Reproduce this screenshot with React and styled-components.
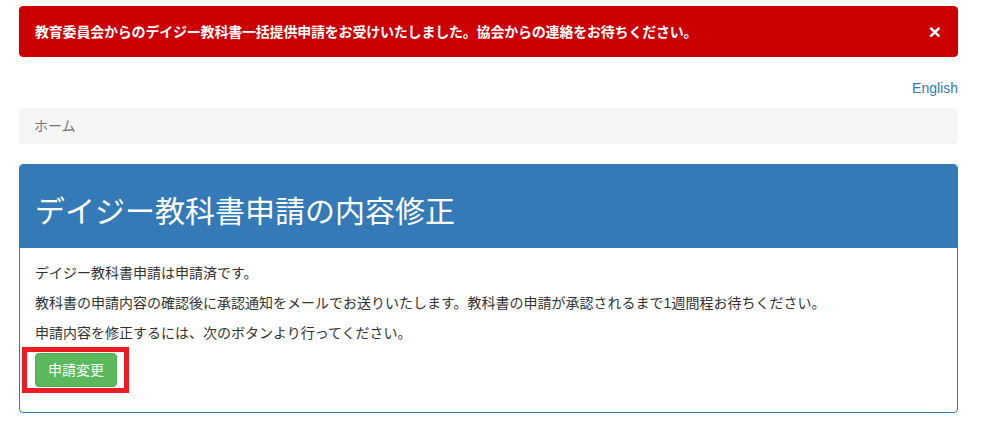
import React from 'react';
import styled, { createGlobalStyle } from 'styled-components';

const GlobalStyle = createGlobalStyle`
  html, body {
    margin: 0;
    padding: 0;
    background: #fff;
  }
  body {
    font-family: "Liberation Sans", "Noto Sans CJK JP", sans-serif;
    font-size: 14px;
    line-height: 20px;
    color: #333;
  }
  * {
    box-sizing: border-box;
  }
`;

// Page container
const Container = styled.div`
  width: 939px;
  margin-left: 19px;
  padding-top: 6px;
`;

// Red flash message
const Alert = styled.div`
  display: flex;
  justify-content: space-between;
  align-items: center;
  background-color: #cc0000;
  border: 1px solid #cc0000;
  border-radius: 4px;
  padding: 14px 15px 14px 15px;
  color: #fff;
  font-weight: bold;
  margin-bottom: 21px;
`;

const AlertText = styled.span`
  letter-spacing: -0.2px;
`;

const Close = styled.button`
  background: none;
  border: none;
  padding: 0;
  margin-right: 1px;
  color: #fff;
  font-family: "Liberation Sans", sans-serif;
  font-size: 21px;
  font-weight: bold;
  line-height: 1;
  cursor: pointer;
`;

// Language switch
const LangRow = styled.div`
  text-align: right;
  margin-bottom: 10px;
`;

const LangLink = styled.a`
  color: #337ab7;
  text-decoration: none;
`;

// Breadcrumb bar
const Breadcrumb = styled.div`
  background-color: #f5f5f5;
  border-radius: 4px;
  padding: 8px 15px;
  margin-bottom: 20px;
  color: #777;
`;

// Panel
const Panel = styled.div`
  border: 1px solid #337ab7;
  border-radius: 4px;
  overflow: hidden;
`;

const PanelHeading = styled.div`
  background-color: #337ab7;
  padding: 10px 15px;
`;

const Title = styled.h1`
  margin: 20px 0 10px;
  font-size: 30px;
  font-weight: 400;
  line-height: 33px;
  color: #fff;
`;

const PanelBody = styled.div`
  padding: 15px;
`;

const Para = styled.p`
  margin: 0 0 10px;
`;

const ButtonWrap = styled.div`
  position: relative;
  display: inline-block;
  margin-bottom: 10px;
`;

const Button = styled.button`
  display: block;
  background-color: #5cb85c;
  border: 1px solid #4cae4c;
  border-radius: 4px;
  color: #fff;
  font-family: inherit;
  font-size: 14px;
  line-height: 20px;
  padding: 6px 12px;
  cursor: pointer;
`;

// Red annotation box drawn over the button
const Highlight = styled.div`
  position: absolute;
  left: -13px;
  top: -6px;
  width: 107px;
  height: 46px;
  border: 5px solid #ed1c24;
  pointer-events: none;
`;

const App = () => {
  return (
    <>
      <GlobalStyle />
      <Container>
        <Alert>
          <AlertText>教育委員会からのデイジー教科書一括提供申請をお受けいたしました。協会からの連絡をお待ちください。</AlertText>
          <Close>×</Close>
        </Alert>
        <LangRow>
          <LangLink href="#">English</LangLink>
        </LangRow>
        <Breadcrumb>ホーム</Breadcrumb>
        <Panel>
          <PanelHeading>
            <Title>デイジー教科書申請の内容修正</Title>
          </PanelHeading>
          <PanelBody>
            <Para>デイジー教科書申請は申請済です。</Para>
            <Para>教科書の申請内容の確認後に承認通知をメールでお送りいたします。教科書の申請が承認されるまで1週間程お待ちください。</Para>
            <Para>申請内容を修正するには、次のボタンより行ってください。</Para>
            <ButtonWrap>
              <Button>申請変更</Button>
              <Highlight />
            </ButtonWrap>
          </PanelBody>
        </Panel>
      </Container>
    </>
  );
};

export default App;
